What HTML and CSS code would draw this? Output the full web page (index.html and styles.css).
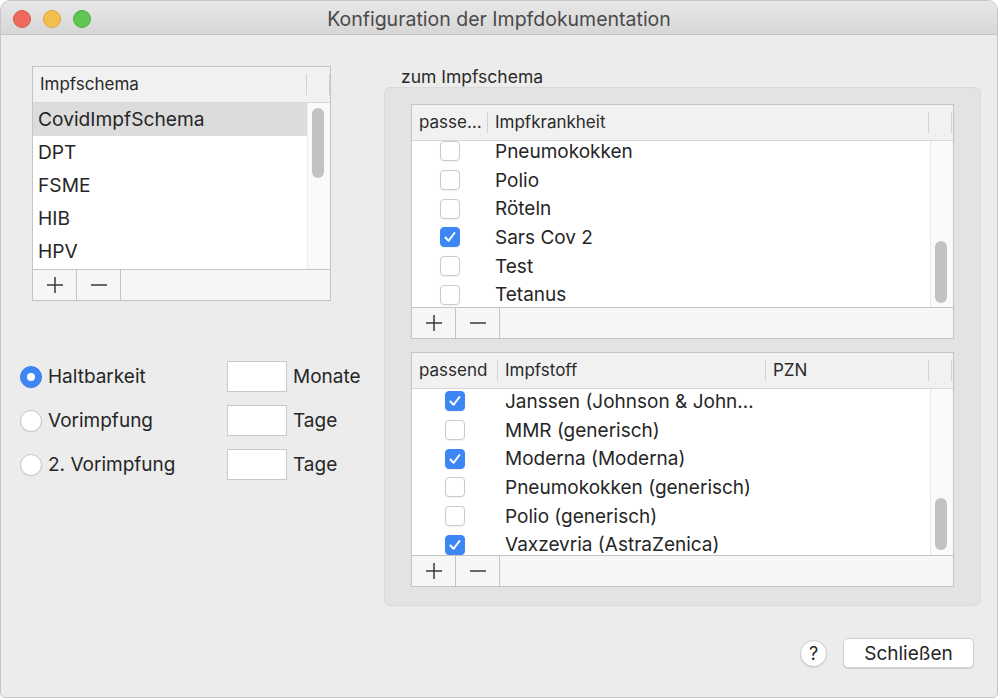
FILE: index.html
```html
<!DOCTYPE html>
<html lang="de">
<head>
<meta charset="utf-8">
<title>Konfiguration der Impfdokumentation</title>
<link rel="stylesheet" href="styles.css">
</head>
<body>
<div class="window">
  <div class="titlebar">
    <div class="lights">
      <span class="light red"></span>
      <span class="light yellow"></span>
      <span class="light green"></span>
    </div>
    <div class="title">Konfiguration der Impfdokumentation</div>
    <div></div>
  </div>

  <div class="content">
    <div class="main">
      <div class="left">
        <div class="table schema">
          <div class="thead">
            <div class="th col-schema">Impfschema</div>
            <div class="th col-spacer"></div>
          </div>
          <div class="tbody">
            <div class="rows">
              <div class="srow selected">CovidImpfSchema</div>
              <div class="srow">DPT</div>
              <div class="srow">FSME</div>
              <div class="srow">HIB</div>
              <div class="srow">HPV</div>
            </div>
            <div class="track"><div class="thumb schema-thumb"></div></div>
          </div>
          <div class="tfoot">
            <div class="tbtn"><svg width="18" height="18" viewBox="0 0 18 18"><path d="M9 1V17M1 9H17" stroke="#3a3a3a" stroke-width="1.5" fill="none"/></svg></div>
            <div class="tbtn"><svg width="18" height="18" viewBox="0 0 18 18"><path d="M1 9H17" stroke="#3a3a3a" stroke-width="1.5" fill="none"/></svg></div>
          </div>
        </div>

        <div class="options">
          <label class="radio"><span class="rbtn on"></span><span>Haltbarkeit</span></label>
          <span class="field"></span>
          <span class="unit">Monate</span>

          <label class="radio"><span class="rbtn"></span><span>Vorimpfung</span></label>
          <span class="field"></span>
          <span class="unit">Tage</span>

          <label class="radio"><span class="rbtn"></span><span>2. Vorimpfung</span></label>
          <span class="field"></span>
          <span class="unit">Tage</span>
        </div>
      </div>

      <div class="right">
        <div class="group-label">zum Impfschema</div>
        <div class="group">
          <div class="table">
            <div class="thead">
              <div class="th c1a">passe…</div>
              <div class="th c2a">Impfkrankheit</div>
              <div class="th col-spacer"></div>
            </div>
            <div class="tbody">
              <div class="rows shift-a">
                <div class="row"><div class="cb-cell c1a"><span class="cb"></span></div><div class="txt">Pneumokokken</div></div>
                <div class="row"><div class="cb-cell c1a"><span class="cb"></span></div><div class="txt">Polio</div></div>
                <div class="row"><div class="cb-cell c1a"><span class="cb"></span></div><div class="txt">Röteln</div></div>
                <div class="row"><div class="cb-cell c1a"><span class="cb on"><svg width="20" height="20" viewBox="0 0 20 20"><path d="M5.5 10.5L8.5 13.8L14.5 6" stroke="#fff" stroke-width="2" fill="none" stroke-linecap="round" stroke-linejoin="round"/></svg></span></div><div class="txt">Sars Cov 2</div></div>
                <div class="row"><div class="cb-cell c1a"><span class="cb"></span></div><div class="txt">Test</div></div>
                <div class="row"><div class="cb-cell c1a"><span class="cb"></span></div><div class="txt">Tetanus</div></div>
              </div>
              <div class="track"><div class="thumb thumb-a"></div></div>
            </div>
            <div class="tfoot">
              <div class="tbtn"><svg width="18" height="18" viewBox="0 0 18 18"><path d="M9 1V17M1 9H17" stroke="#3a3a3a" stroke-width="1.5" fill="none"/></svg></div>
              <div class="tbtn"><svg width="18" height="18" viewBox="0 0 18 18"><path d="M1 9H17" stroke="#3a3a3a" stroke-width="1.5" fill="none"/></svg></div>
            </div>
          </div>

          <div class="table">
            <div class="thead">
              <div class="th c1b">passend</div>
              <div class="th c2b">Impfstoff</div>
              <div class="th c3b">PZN</div>
              <div class="th col-spacer"></div>
            </div>
            <div class="tbody">
              <div class="rows shift-b">
                <div class="row"><div class="cb-cell c1b"><span class="cb on"><svg width="20" height="20" viewBox="0 0 20 20"><path d="M5.5 10.5L8.5 13.8L14.5 6" stroke="#fff" stroke-width="2" fill="none" stroke-linecap="round" stroke-linejoin="round"/></svg></span></div><div class="txt">Janssen (Johnson &amp; John…</div></div>
                <div class="row"><div class="cb-cell c1b"><span class="cb"></span></div><div class="txt">MMR (generisch)</div></div>
                <div class="row"><div class="cb-cell c1b"><span class="cb on"><svg width="20" height="20" viewBox="0 0 20 20"><path d="M5.5 10.5L8.5 13.8L14.5 6" stroke="#fff" stroke-width="2" fill="none" stroke-linecap="round" stroke-linejoin="round"/></svg></span></div><div class="txt">Moderna (Moderna)</div></div>
                <div class="row"><div class="cb-cell c1b"><span class="cb"></span></div><div class="txt">Pneumokokken (generisch)</div></div>
                <div class="row"><div class="cb-cell c1b"><span class="cb"></span></div><div class="txt">Polio (generisch)</div></div>
                <div class="row"><div class="cb-cell c1b"><span class="cb on"><svg width="20" height="20" viewBox="0 0 20 20"><path d="M5.5 10.5L8.5 13.8L14.5 6" stroke="#fff" stroke-width="2" fill="none" stroke-linecap="round" stroke-linejoin="round"/></svg></span></div><div class="txt">Vaxzevria (AstraZenica)</div></div>
              </div>
              <div class="track"><div class="thumb thumb-b"></div></div>
            </div>
            <div class="tfoot">
              <div class="tbtn"><svg width="18" height="18" viewBox="0 0 18 18"><path d="M9 1V17M1 9H17" stroke="#3a3a3a" stroke-width="1.5" fill="none"/></svg></div>
              <div class="tbtn"><svg width="18" height="18" viewBox="0 0 18 18"><path d="M1 9H17" stroke="#3a3a3a" stroke-width="1.5" fill="none"/></svg></div>
            </div>
          </div>
        </div>
      </div>
    </div>

    <div class="footer">
      <button class="help">?</button>
      <button class="close">Schließen</button>
    </div>
  </div>
</div>
</body>
</html>
```

FILE: styles.css
```css
* { box-sizing: border-box; }
html, body { margin: 0; padding: 0; background: #ffffff; }
body {
  font-family: Inter, "Liberation Sans", "DejaVu Sans", sans-serif;
  color: #262626;
}

.window {
  width: 998px;
  height: 698px;
  background: #ececec;
  border: 1px solid #c6c6c6;
  border-radius: 10px 10px 5px 5px;
  overflow: hidden;
  display: flex;
  flex-direction: column;
}

.titlebar {
  flex: none;
  height: 34px;
  padding-top: 3px;
  display: grid;
  grid-template-columns: 1fr auto 1fr;
  align-items: center;
  background: linear-gradient(#e7e7e7, #d7d7d7);
  border-bottom: 1px solid #c3c3c3;
}
.lights { display: flex; gap: 12px; padding-left: 12px; }
.light { width: 18px; height: 18px; border-radius: 50%; }
.red { background: #ee6a5f; border: 1px solid #d9564b; }
.yellow { background: #f5bf4f; border: 1px solid #dba43b; }
.green { background: #61c554; border: 1px solid #4eab41; }
.title { font-size: 19.5px; color: #4a4a4a; white-space: nowrap; }

.content {
  flex: 1;
  padding: 31px 0 0 19px;
  display: flex;
  flex-direction: column;
}
.main { display: flex; gap: 22px; }
.left { width: 342px; }
.right { width: 597px; }

/* tables */
.table {
  height: 235px;
  border: 1px solid #c4c4c4;
  background: #ffffff;
  display: flex;
  flex-direction: column;
}
.schema { width: 299px; margin-left: 12px; }
.thead {
  flex: none;
  height: 36px;
  display: flex;
  background: #f1f1f1;
  border-bottom: 1px solid #d6d6d6;
}
.th {
  position: relative;
  padding-left: 7px;
  font-size: 17px;
  line-height: 35px;
  white-space: nowrap;
  color: #2a2a2a;
}
.th::after {
  content: "";
  position: absolute;
  right: 0;
  top: 7px;
  bottom: 7px;
  width: 1px;
  background: #d2d2d2;
}
.col-schema { width: 274px; }
.col-spacer { width: 23px; }
.c1a { width: 76px; flex: none; }
.c2a { width: 441px; }
.c1b { width: 86px; flex: none; }
.c2b { width: 268px; }
.c3b { width: 163px; }

.tbody {
  flex: 1;
  display: flex;
  overflow: hidden;
}
.rows { flex: 1; }
.shift-a { margin-top: -4px; }
.shift-b { margin-top: -2px; }
.track {
  flex: none;
  width: 23px;
  background: #fafafa;
  border-left: 1px solid #ececec;
}
.thumb {
  width: 12px;
  margin-left: 4px;
  border-radius: 6px;
  background: #c2c2c2;
}
.schema-thumb { margin-top: 5px; height: 70px; }
.thumb-a { margin-top: 100px; height: 62px; }
.thumb-b { margin-top: 109px; height: 52px; }

.srow {
  height: 33px;
  line-height: 33px;
  padding-left: 5px;
  font-size: 19.2px;
}
.srow.selected { background: #dcdcdc; }

.row {
  height: 28.7px;
  display: flex;
  align-items: center;
}
.cb-cell { display: flex; justify-content: center; }
.txt {
  padding-left: 7px;
  font-size: 19px;
  white-space: nowrap;
}
.cb {
  width: 20px;
  height: 20px;
  border-radius: 4px;
  background: #ffffff;
  border: 1px solid #cbcbcb;
  box-shadow: 0 0.5px 1px rgba(0,0,0,0.06);
  display: block;
}
.cb.on {
  background: #3d86f6;
  border-color: #3d86f6;
}
.cb.on svg { display: block; margin: -1px; }

.tfoot {
  flex: none;
  height: 31px;
  display: flex;
  background: #f6f6f6;
  border-top: 1px solid #c4c4c4;
}
.tbtn {
  width: 44px;
  border-right: 1px solid #c4c4c4;
  display: flex;
  align-items: center;
  justify-content: center;
}
.tbtn svg { display: block; }

/* options */
.options {
  margin-top: 60px;
  display: grid;
  grid-template-columns: 201px 60px auto;
  grid-auto-rows: 31px;
  column-gap: 6px;
  row-gap: 13px;
  align-items: center;
  font-size: 19px;
}
.radio { display: flex; align-items: center; gap: 6px; }
.rbtn {
  width: 22px;
  height: 22px;
  border-radius: 50%;
  background: #ffffff;
  border: 1px solid #c8c8c8;
  box-shadow: 0 0.5px 1px rgba(0,0,0,0.08);
  display: flex;
  align-items: center;
  justify-content: center;
}
.rbtn.on { background: #3d86f6; border-color: #3a80ee; }
.rbtn.on::after {
  content: "";
  width: 8px;
  height: 8px;
  border-radius: 50%;
  background: #ffffff;
}
.field {
  height: 31px;
  background: #ffffff;
  border: 1px solid #c9c9c9;
}

/* right group */
.group-label {
  height: 21px;
  line-height: 21px;
  padding-left: 17px;
  font-size: 17.5px;
  color: #2a2a2a;
}
.group {
  height: 519px;
  padding: 16px 26px 18px 26px;
  background: #e3e3e3;
  border: 1px solid #dadada;
  border-radius: 6px;
  display: flex;
  flex-direction: column;
  gap: 13px;
}

/* footer */
.footer {
  margin-top: 32px;
  padding-right: 23px;
  display: flex;
  justify-content: flex-end;
  align-items: center;
  gap: 16px;
}
.help {
  width: 27px;
  height: 27px;
  border-radius: 50%;
  border: 1px solid #cdcdcd;
  background: #ffffff;
  box-shadow: 0 1px 1px rgba(0,0,0,0.1);
  font-family: inherit;
  font-size: 18px;
  color: #262626;
  padding: 0;
  line-height: 25px;
}
.close {
  width: 131px;
  height: 30px;
  border-radius: 5px;
  border: 1px solid #d0d0d0;
  background: #ffffff;
  box-shadow: 0 1px 1px rgba(0,0,0,0.12);
  font-family: inherit;
  font-size: 19px;
  color: #262626;
  padding: 0;
}
```
